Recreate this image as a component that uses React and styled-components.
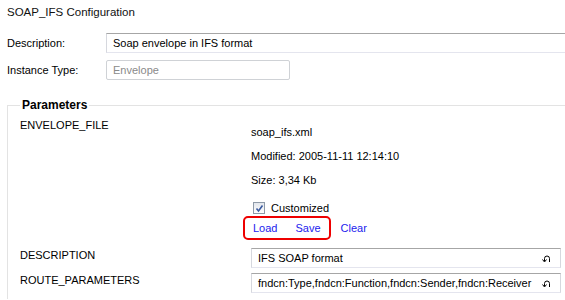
import React from 'react';
import styled, { createGlobalStyle } from 'styled-components';

const GlobalStyle = createGlobalStyle`
  html, body {
    margin: 0;
    padding: 0;
    background: #fff;
  }
  body {
    font-family: 'Liberation Sans', Arial, sans-serif;
    font-size: 11px;
    color: #000;
  }
`;

const Page = styled.div`
  width: 565px;
  height: 300px;
  overflow: hidden;
  padding: 5px 0 0 7px;
  box-sizing: border-box;
`;

const Title = styled.div`
  font-size: 11.5px;
  line-height: 14px;
  color: #111;
`;

const FormGrid = styled.div`
  display: grid;
  grid-template-columns: 99px 1fr;
  row-gap: 7px;
  margin-top: 14px;
  margin-right: -6px;
  align-items: center;
`;

const Label = styled.div`
  line-height: 14px;
`;

const TextBox = styled.div`
  height: 20px;
  box-sizing: border-box;
  padding: 0 9px 0 6px;
  display: flex;
  align-items: center;
  justify-content: space-between;
  width: ${(p) => p.$width || 'auto'};
  color: ${(p) => (p.$disabled ? '#8a8a8a' : '#000')};
  border: 1px solid ${(p) => (p.$disabled ? '#cfd2d6' : '#d6d8de')};
  border-top-color: ${(p) => (p.$disabled ? '#cfd2d6' : '#a6a6a6')};
  border-bottom-color: ${(p) => (p.$disabled ? '#cfd2d6' : '#e4e5ee')};
  border-right: ${(p) => (p.$open ? 'none' : undefined)};
  border-radius: ${(p) => (p.$disabled ? '2px' : '0')};
`;

const Fieldset = styled.fieldset`
  margin: 18px 0 0 0;
  padding: 0 0 0 12px;
  border: none;
  border-top: 1px solid #e3e3e3;
  border-left: 1px solid #e3e3e3;
  height: 200px;
`;

const Legend = styled.legend`
  font-weight: bold;
  font-size: 12px;
  padding: 0 2px;
  margin-left: 0;
  color: #000;
`;

const ParamGrid = styled.div`
  display: grid;
  grid-template-columns: 231px 1fr;
  row-gap: 5px;
  margin-top: 6px;
  margin-right: 4px;
`;

const ParamLabel = styled.div`
  line-height: 14px;
  padding-top: ${(p) => p.$top || 0}px;
`;

const FileInfo = styled.div`
  display: flex;
  flex-direction: column;
  padding-top: 7px;
  margin-bottom: 3px;
`;

const InfoLine = styled.div`
  line-height: 14px;
  margin-bottom: ${(p) => p.$gap || 10}px;
`;

const CheckRow = styled.label`
  display: flex;
  align-items: center;
  gap: 6px;
  margin-left: 2px;
  line-height: 14px;
`;

const Check = styled.span`
  width: 12px;
  height: 12px;
  box-sizing: border-box;
  border: 1px solid #8e9aa8;
  background: linear-gradient(#e2e6ec, #ffffff);
  display: flex;
  align-items: center;
  justify-content: center;
`;

const Actions = styled.div`
  display: flex;
  align-items: center;
  margin-top: 1px;
  margin-left: -8px;
`;

const Highlight = styled.div`
  display: flex;
  align-items: center;
  gap: 18px;
  padding: 0 8px;
  height: 20px;
  border: 2px solid #ee0000;
  border-radius: 5px;
  margin-right: 10px;
`;

const LinkButton = styled.a`
  color: #2222ee;
  text-decoration: none;
  line-height: 14px;
  cursor: pointer;
`;

const ResetIcon = () => (
  <svg width="9" height="9" viewBox="0 0 9 9">
    <path d="M2.5 7V4.5a2.5 2.5 0 0 1 5 0V8" fill="none" stroke="#000" strokeWidth="1" />
    <path d="M0.5 5.5L2.5 8L4.5 5.5" fill="none" stroke="#000" strokeWidth="1" />
  </svg>
);

const Tick = () => (
  <svg width="9" height="9" viewBox="0 0 9 9">
    <path d="M1.5 4.5L3.5 7L7.5 1.5" fill="none" stroke="#3a5aa0" strokeWidth="1.6" />
  </svg>
);

const params = [
  { label: 'DESCRIPTION', value: 'IFS SOAP format' },
  {
    label: 'ROUTE_PARAMETERS',
    value: 'fndcn:Type,fndcn:Function,fndcn:Sender,fndcn:Receiver',
  },
];

export default function App() {
  return (
    <Page>
      <GlobalStyle />
      <Title>SOAP_IFS Configuration</Title>

      <FormGrid>
        <Label>Description:</Label>
        <TextBox $open>Soap envelope in IFS format</TextBox>
        <Label>Instance Type:</Label>
        <TextBox $disabled $width="184px">Envelope</TextBox>
      </FormGrid>

      <Fieldset>
        <Legend>Parameters</Legend>
        <ParamGrid>
          <ParamLabel $top={0}>ENVELOPE_FILE</ParamLabel>
          <FileInfo>
            <InfoLine>soap_ifs.xml</InfoLine>
            <InfoLine>Modified: 2005-11-11 12:14:10</InfoLine>
            <InfoLine $gap={14}>Size: 3,34 Kb</InfoLine>
            <CheckRow>
              <Check>
                <Tick />
              </Check>
              Customized
            </CheckRow>
            <Actions>
              <Highlight>
                <LinkButton>Load</LinkButton>
                <LinkButton>Save</LinkButton>
              </Highlight>
              <LinkButton>Clear</LinkButton>
            </Actions>
          </FileInfo>

          {params.map((p) => (
            <React.Fragment key={p.label}>
              <ParamLabel $top={0}>{p.label}</ParamLabel>
              <TextBox>
                {p.value}
                <ResetIcon />
              </TextBox>
            </React.Fragment>
          ))}
        </ParamGrid>
      </Fieldset>
    </Page>
  );
}
